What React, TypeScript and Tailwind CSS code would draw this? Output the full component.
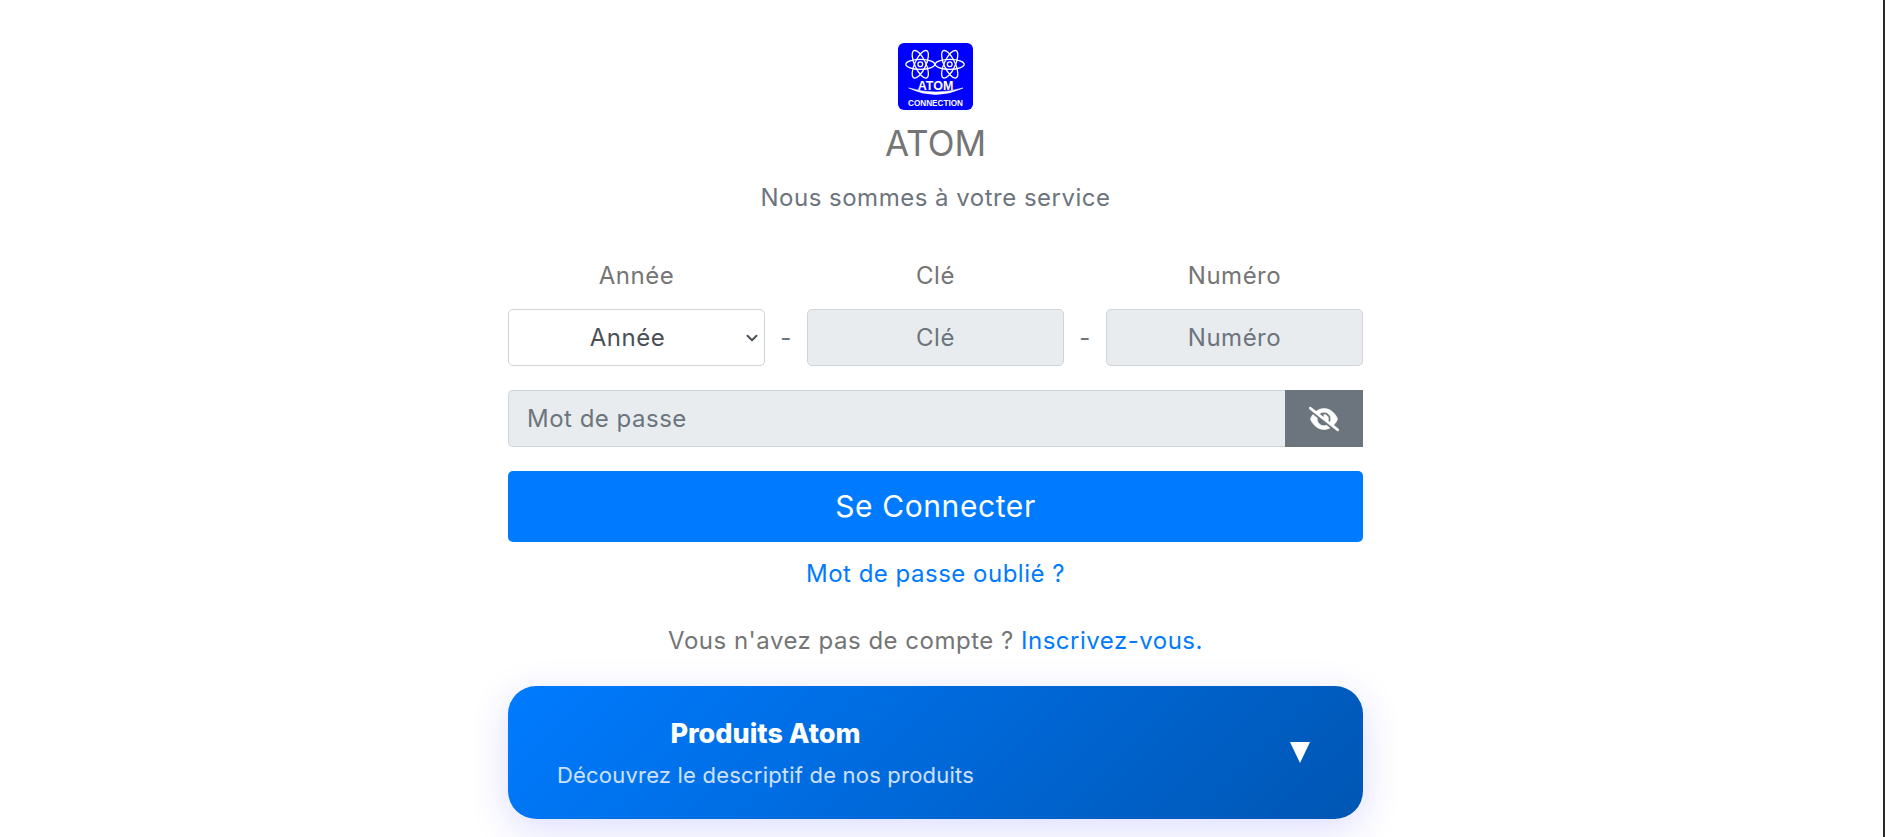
import { ChevronDown } from "lucide-react";
import { FaEyeSlash } from "react-icons/fa6";

function AtomMark({ cx }: { cx: number }) {
  return (
    <g fill="none" stroke="#fff" strokeWidth="1.3">
      <ellipse cx={cx} cy="21.3" rx="14.5" ry="5" />
      <ellipse cx={cx} cy="21.3" rx="15" ry="5.5" transform={`rotate(65 ${cx} 21.3)`} />
      <ellipse cx={cx} cy="21.3" rx="15" ry="5.5" transform={`rotate(115 ${cx} 21.3)`} />
      <circle cx={cx} cy="21.3" r="2.4" />
    </g>
  );
}

function Logo() {
  return (
    <svg width="75" height="67" viewBox="0 0 75 67" className="block">
      <rect width="75" height="67" rx="6" fill="#0000ff" />
      <AtomMark cx={22.3} />
      <AtomMark cx={51.7} />
      <text
        x="37.5"
        y="47"
        textAnchor="middle"
        fill="#fff"
        fontSize="12.5"
        fontWeight="700"
        fontFamily="Liberation Sans, sans-serif"
      >
        ATOM
      </text>
      <path d="M10.7 45 Q37.5 58 65 45 Q37.5 53 10.7 45Z" fill="#fff" stroke="#fff" strokeWidth="0.6" />
      <text
        x="37.5"
        y="63"
        textAnchor="middle"
        fill="#fff"
        fontSize="8.2"
        fontWeight="700"
        fontFamily="Liberation Sans, sans-serif"
      >
        CONNECTION
      </text>
    </svg>
  );
}

export default function App() {
  return (
    <div className="flex h-[837px] overflow-hidden bg-white font-['Inter',sans-serif] text-[#6c757d]">
      <main className="flex flex-1 flex-col items-center pt-[43px] pr-[12px]">
        <Logo />
        <h1 className="mt-[9px] text-[35px] leading-[48px] font-normal text-[#757575]">ATOM</h1>
        <p className="mt-[16px] text-[24px] leading-[30px] tracking-[0.5px]">Nous sommes à votre service</p>

        <form className="mt-[48px] flex w-[855px] flex-col text-[24px] tracking-[0.5px]">
          <div className="flex text-center leading-[30px] text-[#757575]">
            <span className="w-[257px]">Année</span>
            <span className="ml-[42px] w-[257px]">Clé</span>
            <span className="ml-[42px] w-[257px]">Numéro</span>
          </div>

          <div className="mt-[18px] flex h-[57px] items-center justify-between">
            <div className="relative h-full w-[257px]">
              <select className="h-full w-full appearance-none rounded-[5px] border border-[#ced4da] bg-white pr-[30px] pl-3 text-[#495057] [text-align-last:center]">
                <option>Année</option>
              </select>
              <ChevronDown
                size={18}
                strokeWidth={2.6}
                className="pointer-events-none absolute top-1/2 right-[4px] -translate-y-1/2 text-[#495057]"
              />
            </div>
            <span className="w-[42px] text-center">-</span>
            <input
              placeholder="Clé"
              className="h-full w-[257px] rounded-[5px] border border-[#ced4da] bg-[#e9ecef] px-3 text-center placeholder:text-[#6c757d]"
            />
            <span className="w-[42px] text-center">-</span>
            <input
              placeholder="Numéro"
              className="h-full w-[257px] rounded-[5px] border border-[#ced4da] bg-[#e9ecef] px-3 text-center placeholder:text-[#6c757d]"
            />
          </div>

          <div className="mt-[24px] flex h-[57px]">
            <input
              placeholder="Mot de passe"
              className="h-full flex-1 rounded-l-[5px] border border-r-0 border-[#ced4da] bg-[#e9ecef] px-[18px] placeholder:text-[#6c757d]"
            />
            <button type="button" className="flex w-[78px] items-center justify-center bg-[#6c757d] text-white">
              <FaEyeSlash size={30} stroke="currentColor" strokeWidth={12} />
            </button>
          </div>

          <button
            type="button"
            className="mt-[24px] h-[71px] rounded-[5px] bg-[#007bff] text-[30px] tracking-[0.6px] text-white"
          >
            Se Connecter
          </button>

          <a className="mt-[17px] text-center leading-[30px] text-[#007bff]">Mot de passe oublié ?</a>

          <p className="mt-[37px] text-center leading-[30px] text-[#757575]">
            Vous n'avez pas de compte ? <a className="text-[#007bff]">Inscrivez-vous.</a>
          </p>

          <button
            type="button"
            className="mt-[30px] flex h-[133px] items-center justify-between rounded-[28px] bg-linear-[135deg,#007bff,#0056b3] pr-[53px] pl-[49px] text-white shadow-[0_10px_40px_rgba(0,0,255,0.14)]"
          >
            <span className="flex flex-col items-center tracking-normal">
              <span className="text-[27px] leading-[36px] font-extrabold">Produits Atom</span>
              <span className="mt-[8px] text-[22px] leading-[30px] tracking-[0.2px] text-white/80">
                Découvrez le descriptif de nos produits
              </span>
            </span>
            <svg width="20" height="21" viewBox="0 0 20 21" className="block">
              <polygon points="0,0 20,0 10,21" fill="#fff" />
            </svg>
          </button>
        </form>
      </main>
      <div className="w-[2px] bg-[#2b2b2b]" />
    </div>
  );
}
